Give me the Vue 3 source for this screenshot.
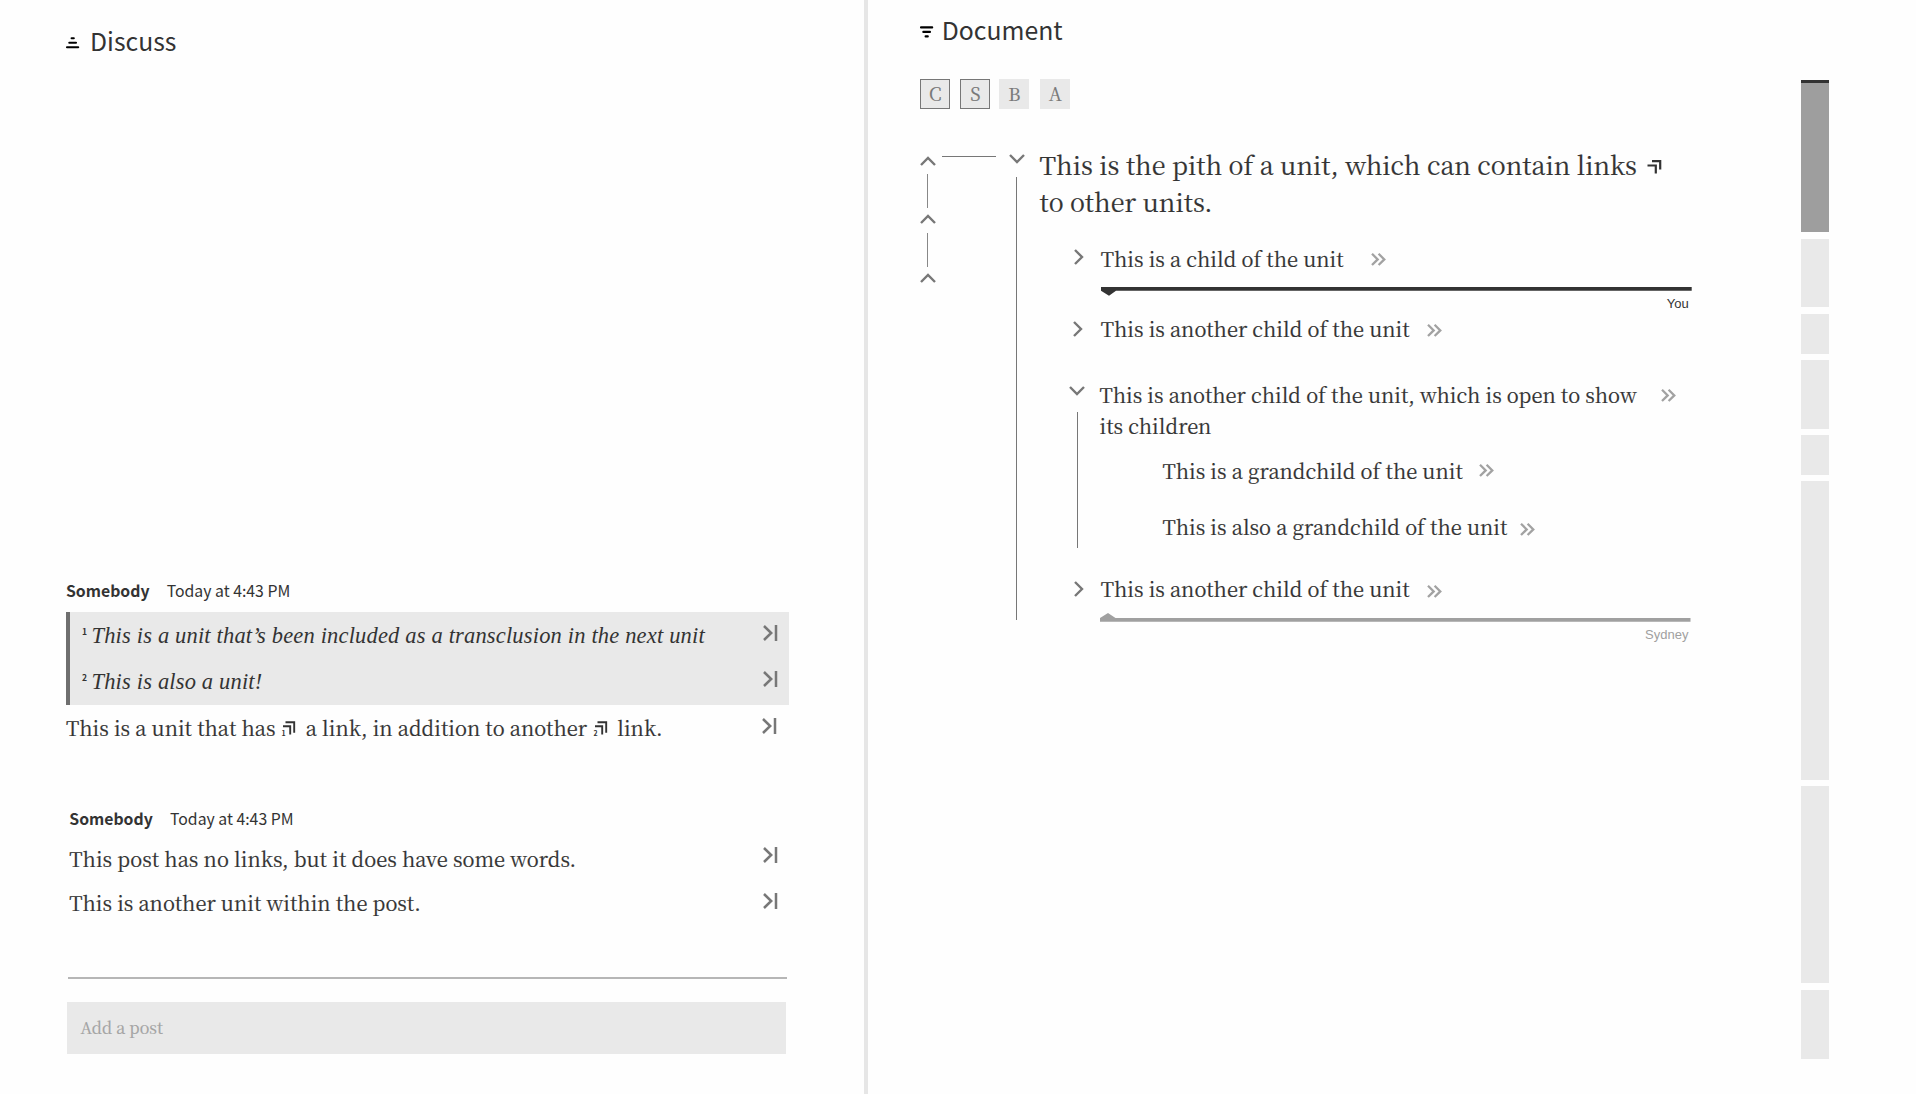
<script setup>
import { h } from 'vue'

const svg = (cls, w, ht, d, sw) => () =>
  h('svg', { class: cls, width: w, height: ht, viewBox: `0 0 ${w} ${ht}`, fill: 'none', stroke: 'currentColor', 'stroke-width': sw }, [h('path', { d })])

const Jump = svg('jump', 15, 16, 'M1 1L8.2 8L1 15M13 0V16', 2.5)
const More = svg('more', 15, 13, 'M1 0.8L6.7 6.4L1 12M7.6 0.8L13.3 6.4L7.6 12', 2.3)
const Up = svg('caret', 16, 10, 'M1 9L8 2L15 9', 2.4)
const Down = svg('caret', 16, 10, 'M1 1L8 8L15 1', 2.4)
const Right = svg('caret', 10, 16, 'M1 1L8 8L1 15', 2.4)

const chips = [
  { label: 'C', on: true },
  { label: 'S', on: true },
  { label: 'B', on: false },
  { label: 'A', on: false },
]
const segments = [68.5, 40, 68.5, 39.5, 298.5, 197, 69]
</script>

<template>
  <div class="app">
    <section class="discuss">
      <h1 class="heading">
        <svg width="13" height="12" viewBox="0 0 13 12" stroke="#000" stroke-width="2.1" stroke-linecap="round"><path d="M5.6 1.2H7.8M3.3 5.7H10M1 10.2H12.2" /></svg>
        <span>Discuss</span>
      </h1>

      <article class="post first">
        <header class="meta"><b>Somebody</b><span>Today at 4:43 PM</span></header>
        <div class="transclusions">
          <div class="row"><i class="num">1</i><em>This is a unit that’s been included as a transclusion in the next unit</em><Jump /></div>
          <div class="row"><i class="num">2</i><em>This is also a unit!</em><Jump /></div>
        </div>
        <div class="row">
          <span>This is a unit that has</span>
          <svg class="ref" width="14" height="16" viewBox="0 0 14 16"><path d="M3.5 1.3H12.2V11.8M1 5.3H8.2V13.4" fill="none" stroke="#333" stroke-width="1.9" /><text x="-0.6" y="14.6">1</text></svg>
          <span>a link, in addition to another</span>
          <svg class="ref" width="14" height="16" viewBox="0 0 14 16"><path d="M3.5 1.3H12.2V11.8M1 5.3H8.2V13.4" fill="none" stroke="#333" stroke-width="1.9" /><text x="-0.6" y="14.6">2</text></svg>
          <span>link.</span>
          <Jump />
        </div>
      </article>

      <article class="post second">
        <header class="meta"><b>Somebody</b><span>Today at 4:43 PM</span></header>
        <div class="row"><span class="wide">This post has no links, but it does have some words.</span><Jump /></div>
        <div class="row"><span>This is another unit within the post.</span><Jump /></div>
      </article>

      <div class="rule"></div>
      <div class="composer">Add a post</div>
    </section>

    <section class="document">
      <div class="main">
        <h1 class="heading">
          <svg width="13" height="12" viewBox="0 0 13 12" stroke="#000" stroke-width="2.1" stroke-linecap="round"><path d="M1 1.4H12.2M3.3 5.9H10M5.6 10.4H7.8" /></svg>
          <span>Document</span>
        </h1>

        <div class="chips">
          <span v-for="c in chips" :key="c.label" class="chip" :class="{ on: c.on }">{{ c.label }}</span>
        </div>

        <div class="tree">
          <div class="ancestors">
            <Up /><div class="stem"></div><Up /><div class="stem"></div><Up />
          </div>
          <div class="branch"></div>
          <div class="toggle"><Down /><div class="line"></div></div>

          <div class="unit">
            <p class="pith">
              This is the pith of a unit, which can contain links<svg class="link" width="15" height="14" viewBox="0 0 15 14" fill="none" stroke="#333" stroke-width="2.2"><path d="M5 1.1H13.2V9.5M0.5 5.5H8.8V13.5" /></svg><br />to other units.
            </p>

            <div class="child c1"><Right /><span>This is a child of the unit</span><More /></div>
            <div class="mark you">
              <svg width="592" height="9" viewBox="0 0 592 9"><path d="M0 0H590.7V3.7H15L8 8.8L0 3.7Z" fill="#333" /></svg>
              <small>You</small>
            </div>

            <div class="child c2"><Right /><span>This is another child of the unit</span><More /></div>

            <div class="open">
              <div class="toggle"><Down /><div class="line"></div></div>
              <div class="kids">
                <div class="child c3"><span>This is another child of the unit, which is open to show<br />its children</span><More /></div>
                <div class="child g1"><span>This is a grandchild of the unit</span><More /></div>
                <div class="child g2"><span>This is also a grandchild of the unit</span><More /></div>
              </div>
            </div>

            <div class="child c4"><Right /><span>This is another child of the unit</span><More /></div>
            <div class="mark sydney">
              <svg width="592" height="9" viewBox="0 0 592 9"><path d="M0 5L8 0L15.5 5H590.5V8.8H0Z" fill="#a0a0a0" /></svg>
              <small>Sydney</small>
            </div>
          </div>
        </div>
      </div>

      <aside class="minimap">
        <div class="current"></div>
        <div v-for="(s, i) in segments" :key="i" class="segment" :style="{ height: s + 'px' }"></div>
      </aside>
    </section>
  </div>
</template>

<style>
body { background: #fefefe; }
</style>

<style scoped>
.app {
  display: flex;
  height: 1094px;
  overflow: hidden;
  background: #fefefe;
  color: #333;
  font: 20.1px "Noto Serif CJK SC", "Liberation Serif", serif;
  white-space: nowrap;
}
.row > span, .child > span, .pith, .chip, .composer { -webkit-text-stroke: 0.2px currentColor; }
svg { display: block; flex: none; overflow: visible; }
.heading {
  display: flex;
  align-items: center;
  margin: 0;
  height: 36px;
  font: 400 24.8px/36px "Noto Sans CJK SC", "Open Sans", sans-serif;
}

.discuss {
  box-sizing: border-box;
  flex: none;
  width: 868.3px;
  padding: 22px 79px 0 66px;
  border-right: 4.3px solid #e6e6e6;
}
.discuss .heading span { margin-left: 11px; }
.discuss .heading svg { margin-top: 5px; }
.post.first { margin-top: 521px; }
.post.second { margin-top: 56px; }
.meta { display: flex; height: 24px; font: 15.8px/24px "Noto Sans CJK SC", "Open Sans", sans-serif; }
.meta b { width: 100.7px; }
.post.second { padding-left: 3.3px; }
.post.second .meta { margin-bottom: 6px; }
.transclusions {
  margin-top: 9.4px;
  height: 93px;
  width: 718.7px;
  border-left: 4.5px solid #6f6f6f;
  background: #e9e9e9;
}
.row { position: relative; display: flex; align-items: center; height: 46px; line-height: 46px; width: 722.5px; }
.transclusions .row { width: 718.7px; }
.second .row { height: 44px; line-height: 44px; width: 719.7px; }
.row :deep(.jump) { margin-left: auto; margin-right: 11.2px; margin-bottom: 5px; color: #777; }
.second .row:nth-of-type(1) :deep(.jump) { margin-bottom: 9px; }
.second .row:last-child :deep(.jump) { margin-bottom: 5px; }
.wide { letter-spacing: 0.03px; }
.num { width: 9.5px; margin-left: 12px; margin-bottom: 8px; font: 700 8.5px/12px "Noto Sans CJK SC", sans-serif; }
em { margin-top: 1px; font: italic 22.5px/46px "Liberation Serif", serif; letter-spacing: 0.17px; }
.ref { margin: 2px 9.7px 0 6.5px; }
.ref text { font: 700 7px "Noto Sans CJK SC", sans-serif; fill: #333; }
.rule { margin: 51.6px 0 0 2px; height: 2px; width: 719px; background: #b6b6b6; }
.composer {
  margin: 23px 0 0 1px;
  width: 706px;
  height: 52px;
  padding-left: 13.4px;
  background: #e9e9e9;
  color: #a2a2a2;
  font-size: 16.2px;
  line-height: 51px;
}

.document { display: flex; flex: 1; }
.main { width: 933.2px; padding: 11px 0 0 51.7px; box-sizing: border-box; flex: none; }
.document .heading span { margin-left: 8.7px; }
.document .heading svg { margin-top: 6px; }
.chips { display: flex; margin: 32px 0 0 0.3px; }
.chip {
  box-sizing: border-box;
  width: 30px;
  height: 30px;
  margin-right: 9px;
  border: 1px solid transparent;
  background: #e9e9e9;
  color: #777;
  font-size: 18.2px;
  line-height: 27px;
  text-align: center;
}
.chip.on { border-color: #777; }
.chip:nth-child(1) { margin-right: 10px; }
.chip:nth-child(3) { margin-right: 11px; }
:deep(.caret) { color: #777; }
.tree { display: flex; align-items: flex-start; margin-top: 36.5px; }
.ancestors { width: 22px; margin-top: 10.3px; }
.stem { width: 1.4px; height: 34px; margin: 8.3px 0 6.3px 6.8px; background: #888; }
.branch { width: 54px; height: 1.5px; margin-top: 10.4px; background: #777; }
.toggle { width: 31px; }
.tree > .toggle { width: 30.5px; margin: 8px 0 0 13px; }
.line { width: 1.4px; background: #777; }
.tree > .toggle .line { height: 443px; margin: 13px 0 0 7px; }

.unit { width: 652px; }
.pith { margin: 0; font-size: 25.1px; line-height: 37px; }
.link { display: inline-block; margin-left: 9.5px; vertical-align: 1px; }
.child { display: flex; align-items: center; height: 31px; line-height: 31px; }
.child :deep(.more) { color: #a2a2a2; }
.unit > .child :deep(.caret) { margin: 0 16.5px 0 34.8px; }
.c1 { margin-top: 23.2px; }
.c1 :deep(.more) { margin: 3px 0 0 27.2px; }
.unit > .c1 :deep(.caret) { margin-bottom: 1.5px; }
.mark { margin-left: 61px; }
.mark svg { position: relative; left: 0.6px; }
.mark small { display: block; margin-right: 2.7px; font: 13px/16px "Liberation Sans", sans-serif; text-align: right; }
.you { margin-top: 13.7px; }
.c2 { margin-top: 0.3px; }
.unit > .c2 :deep(.caret) { margin-left: 33.8px; margin-right: 17.5px; margin-top: 2px; }
.c2 :deep(.more), .c4 :deep(.more) { margin: 5px 0 0 17.8px; }
.open { display: flex; align-items: flex-start; margin-top: 35px; padding-left: 30px; }
.open .toggle { width: 30px; margin-top: 7px; }
.open .line { width: 1px; height: 136px; margin: 16px 0 0 7.5px; }
.c3 { height: 62px; align-items: flex-start; }
.c3 :deep(.more) { margin: 10.5px 0 0 24.5px; }
.g1 { margin: 14px 0 0 63px; }
.g1 :deep(.more) { margin: 1px 0 0 16.5px; }
.g2 { margin: 25px 0 0 63px; }
.g2 :deep(.more) { margin: 6px 0 0 13px; }
.c4 { margin-top: 25.5px; }
.sydney { margin: 8.5px 0 0 60px; color: #a0a0a0; }
.sydney small { margin-right: 3px; margin-top: 5px; }

.minimap { width: 27.5px; margin-top: 79.5px; }
.current { box-sizing: border-box; height: 152.7px; border-top: 3.5px solid #333; background: #9e9e9e; }
.segment { margin-top: 6.5px; background: #e9e9e9; }
</style>
